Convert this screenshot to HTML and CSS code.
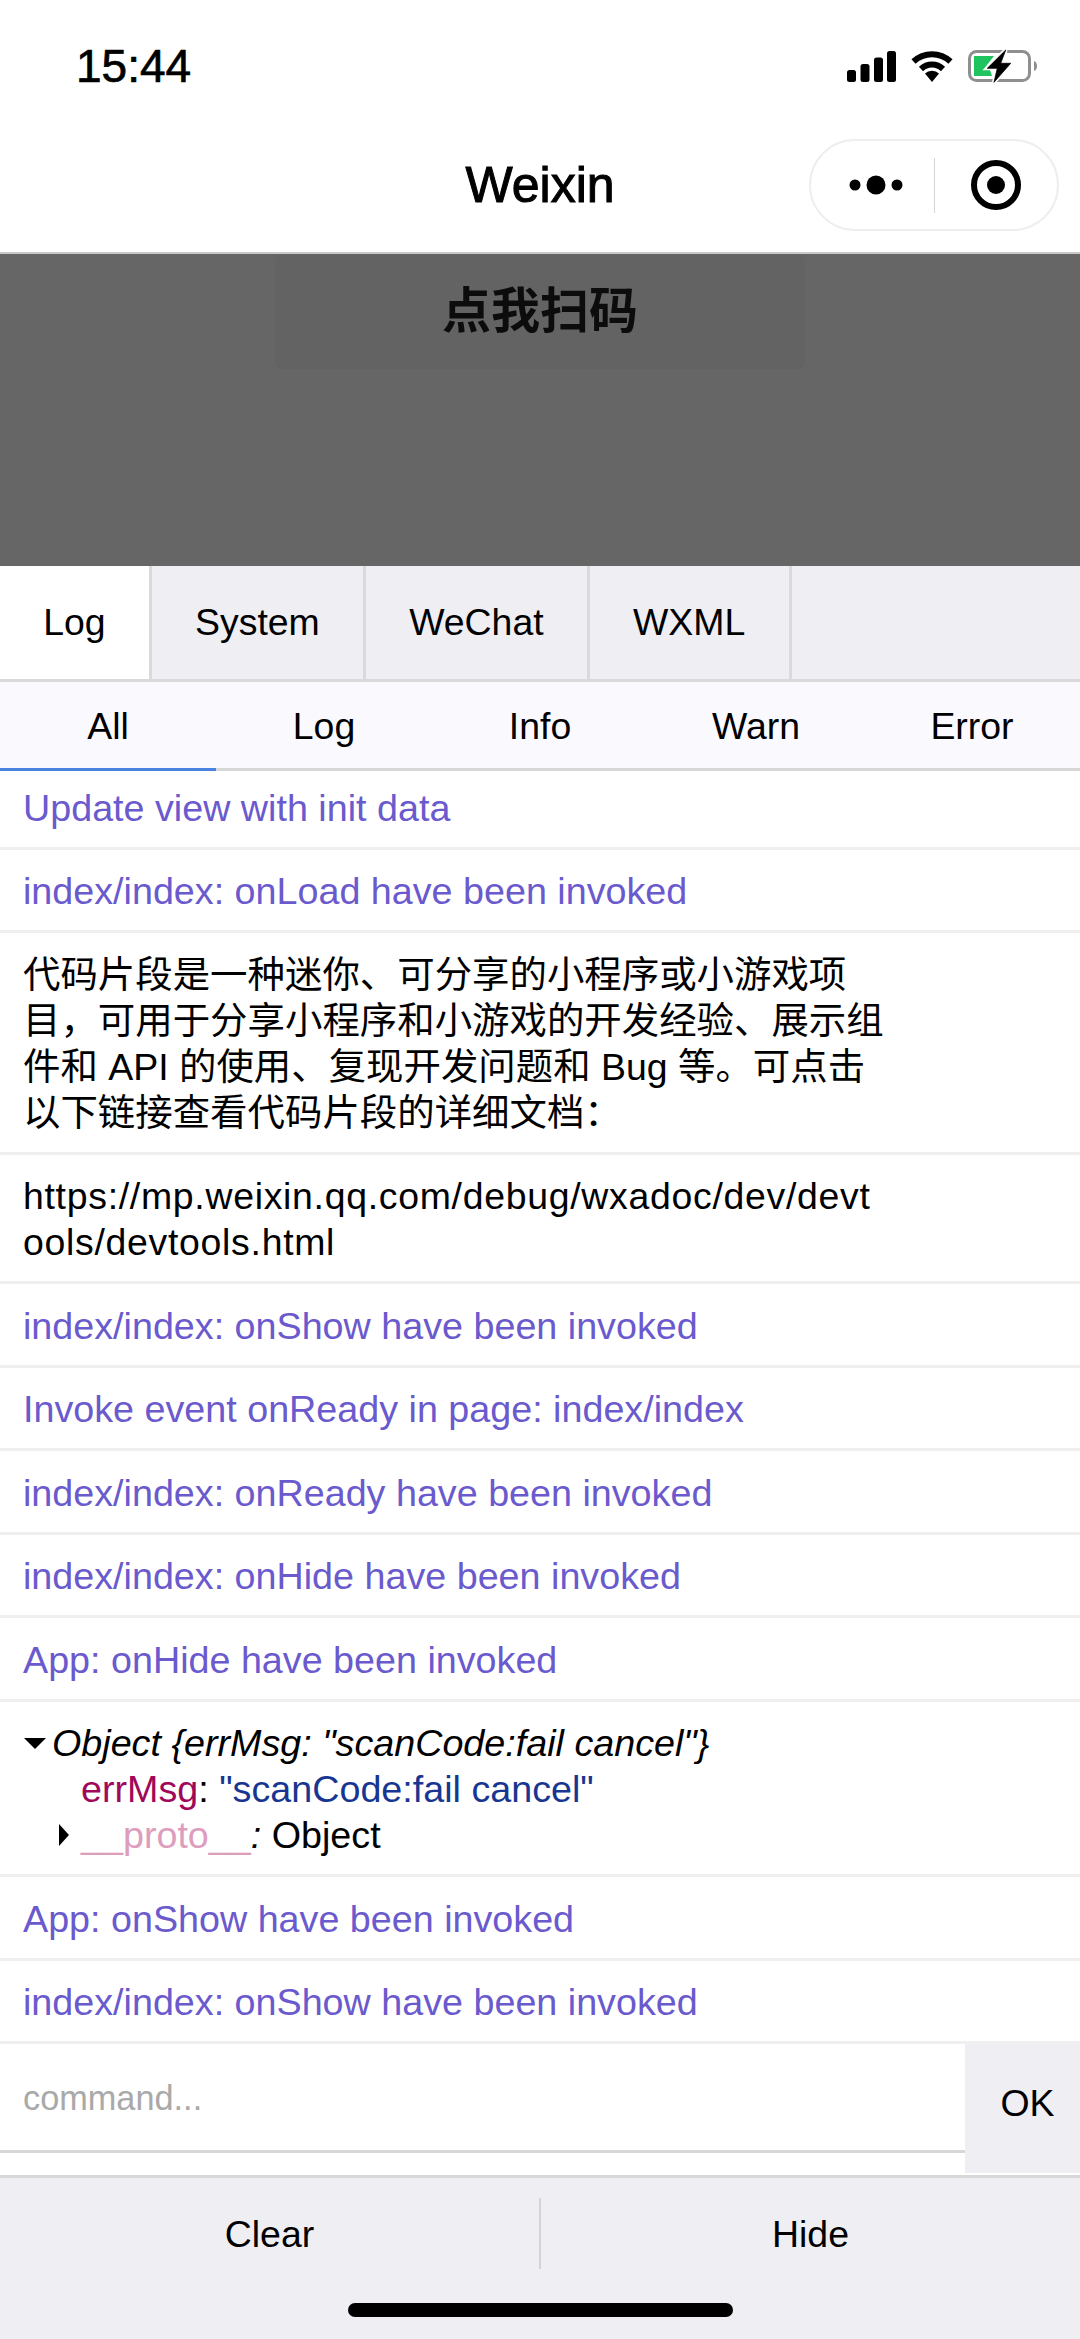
FILE: index.html
```html
<!DOCTYPE html>
<html lang="zh">
<head>
<meta charset="utf-8">
<title>Weixin</title>
<link rel="stylesheet" href="styles.css">
</head>
<body>
<div class="phone">
  <header class="top">
    <div class="status">
      <span class="time">15:44</span>
      <div class="status-icons">
        <svg class="sig" viewBox="0 0 49 31"><rect x="0" y="19" width="9" height="12" rx="2.5"/><rect x="13.5" y="13" width="9" height="18" rx="2.5"/><rect x="27" y="6.500" width="9" height="24.500" rx="2.500"/><rect x="40" y="0" width="9" height="31" rx="2.500"/></svg>
        <svg class="wifi" viewBox="0 0 42 32"><path class="wifi-arc" d="M2.500 11.500A27 27 0 0 1 39.500 11.500"/><path class="wifi-arc" d="M10 19A16 16 0 0 1 32 19"/><path d="M14 23.500A10 10 0 0 1 28 23.500L21 32Z"/></svg>
        <svg class="batt" viewBox="0 0 70 36"><rect class="batt-box" x="1.500" y="3.500" width="60" height="29" rx="7"/><path class="batt-nub" d="M66 13q3 1 3 5t-3 5Z"/><path class="batt-fill" d="M6 8H26L15 22H22L24 28H6Z"/><path class="bolt-halo" d="M37.700 2L19.300 20.300H29.300L26 34.300L42.700 15.300H32.700Z"/><path class="bolt" d="M37.700 2L19.300 20.300H29.300L26 34.300L42.700 15.300H32.700Z"/></svg>
      </div>
    </div>
    <nav class="nav">
      <span></span>
      <h1 class="title">Weixin</h1>
      <div class="capsule">
        <div class="cap-part cap-more"><svg class="dots" viewBox="0 0 54 20"><circle cx="6" cy="10" r="5.500"/><circle cx="27" cy="10" r="9.500"/><circle cx="48" cy="10" r="5.500"/></svg></div>
        <i class="cap-line"></i>
        <div class="cap-part"><svg class="target" viewBox="0 0 50 50"><circle class="ring" cx="25" cy="25" r="22"/><circle cx="25" cy="25" r="9"/></svg></div>
      </div>
    </nav>
  </header>

  <section class="masked">
    <div class="scan">点我扫码</div>
  </section>

  <section class="console">
    <div class="tabs">
      <div class="tab tab-on">Log</div>
      <div class="tab">System</div>
      <div class="tab">WeChat</div>
      <div class="tab">WXML</div>
    </div>
    <div class="subtabs">
      <div class="sub sub-on">All</div>
      <div class="sub">Log</div>
      <div class="sub">Info</div>
      <div class="sub">Warn</div>
      <div class="sub">Error</div>
    </div>
    <div class="logs">
      <div class="row row-info row-first">Update view with init data</div>
      <div class="row row-info">index/index: onLoad have been invoked</div>
      <div class="row"><div class="wrap">代码片段是一种迷你、可分享的小程序或小游戏项目，可用于分享小程序和小游戏的开发经验、展示组件和 API 的使用、复现开发问题和 Bug 等。可点击以下链接查看代码片段的详细文档：</div></div>
      <div class="row"><div class="wrap wrap-url">https://mp.weixin.qq.com/debug/wxadoc/dev/devtools/devtools.html</div></div>
      <div class="row row-info">index/index: onShow have been invoked</div>
      <div class="row row-info">Invoke event onReady in page: index/index</div>
      <div class="row row-info">index/index: onReady have been invoked</div>
      <div class="row row-info">index/index: onHide have been invoked</div>
      <div class="row row-info">App: onHide have been invoked</div>
      <div class="row row-tree">
        <div class="tree-line"><i class="tri-down"></i><em>Object {errMsg: "scanCode:fail cancel"}</em></div>
        <div class="tree-line tree-child"><span class="key">errMsg</span>: <span class="val">"scanCode:fail cancel"</span></div>
        <div class="tree-line tree-child tree-proto"><i class="tri-right"></i><span class="key key-dim">__proto__</span><em>:</em> Object</div>
      </div>
      <div class="row row-info">App: onShow have been invoked</div>
      <div class="row row-info">index/index: onShow have been invoked</div>
    </div>
    <div class="cmd">
      <div class="cmd-left">
        <div class="cmd-input">command...</div>
      </div>
      <div class="cmd-ok">OK</div>
    </div>
    <footer class="foot">
      <div class="foot-btns">
        <div class="foot-btn">Clear</div>
        <div class="foot-btn foot-btn-last">Hide</div>
      </div>
      <div class="home"></div>
    </footer>
  </section>
</div>
</body>
</html>
```
FILE: styles.css
```css
* { box-sizing: border-box; }
html, body { margin: 0; padding: 0; background: #fff; }
body {
  font-family: "Liberation Sans", "Noto Sans CJK SC", sans-serif;
  color: #000;
  font-size: 37.44px;
  line-height: 46px;
}
.phone { width: 1080px; height: 2339px; display: flex; flex-direction: column; overflow: hidden; }

.top { height: 254px; background: #fff; border-bottom: 2px solid #c9c9c9; flex: none; }
.status { height: 100px; display: flex; justify-content: space-between; align-items: center; padding: 32px 42px 0 76px; }
.time { font-size: 46px; line-height: 50px; -webkit-text-stroke: 0.7px #000; }
.status-icons { display: flex; align-items: center; gap: 15px; }
.sig { width: 49px; height: 31px; display: block; }
.wifi { width: 42px; height: 32px; display: block; }
.wifi-arc { fill: none; stroke: #000; stroke-width: 6; }
.batt { width: 70px; height: 36px; display: block; }
.batt-box { fill: none; stroke: #8f8f8f; stroke-width: 3; }
.batt-nub { fill: #8f8f8f; }
.batt-fill { fill: #1fc45e; }
.bolt-halo { fill: #fff; stroke: #fff; stroke-width: 4; }
.bolt { fill: #000; stroke: #000; stroke-width: 0.8; }

.nav { height: 152px; display: grid; grid-template-columns: minmax(0, 1fr) auto minmax(0, 1fr); align-items: center; padding: 18px 21px 0; }
.title { margin: 0; font-size: 50px; line-height: 60px; font-weight: 400; -webkit-text-stroke: 1px #000; }
.capsule { justify-self: end; width: 250px; height: 92px; border: 2px solid #eeeeee; border-radius: 46px; display: flex; align-items: center; background: #fff; }
.cap-part { width: 122.500px; flex: none; display: flex; align-items: center; justify-content: center; }
.cap-more { padding-left: 8px; }
.cap-line { width: 1px; height: 55px; background: #d5d5d5; flex: none; }
.dots { width: 54px; height: 20px; display: block; }
.target { width: 50px; height: 50px; display: block; }
.ring { fill: none; stroke: #000; stroke-width: 6; }

.masked { height: 312px; background: #666666; display: flex; justify-content: center; flex: none; }
.scan { width: 530px; height: 115px; background: #636363; border-radius: 8px; text-align: center; font-family: "Noto Sans CJK SC", sans-serif; font-weight: 700; font-size: 49px; line-height: 106px; color: #0c0c0c; }

.console { flex: 1; display: flex; flex-direction: column; min-height: 0; }
.tabs { height: 116px; display: flex; background: #eeeef3; border-bottom: 3px solid #dadada; flex: none; }
.tab { padding: 0 43.200px; line-height: 112px; border-right: 3px solid #dadada; }
.tab-on { background: #fff; }
.subtabs { height: 89px; display: flex; background: #f9f9fe; border-bottom: 3px solid #d8d8d8; flex: none; }
.sub { width: 216px; text-align: center; line-height: 88px; height: 89px; }
.sub-on { border-bottom: 3px solid #4a84e0; }

.logs { flex: none; }
.row { padding: 18.500px 23px 16px; border-bottom: 3px solid #efefef; background: #fff; font-size: 37.7px; }
.row-info { color: #6a5acd; }
.row-first { padding-top: 13.500px; }
.wrap { width: 867px; font-size: 37.44px; }
.wrap-url { word-break: break-all; letter-spacing: 0.7px; }
.tree-line { position: relative; }
.tree-line em { font-style: italic; }
.tree-line > em:first-of-type { padding-left: 29px; }
.tree-child { padding-left: 58px; }
.tree-proto > em:first-of-type { padding-left: 0; }
.key { color: #a0085a; }
.key-dim { color: #dd9dbd; }
.val { color: #183691; }
.tri-down { position: absolute; left: 1px; top: 18px; width: 0; height: 0; border-left: 11px solid transparent; border-right: 11px solid transparent; border-top: 11px solid #000; }
.tri-right { position: absolute; left: 36px; top: 12px; width: 0; height: 0; border-top: 11px solid transparent; border-bottom: 11px solid transparent; border-left: 10px solid #000; }

.cmd { height: 131px; display: flex; flex: none; background: #fff; }
.cmd-left { flex: 1; }
.cmd-input { height: 109px; border-bottom: 3px solid #d8d8d8; padding-left: 23px; font-size: 34.300px; line-height: 109px; color: #a9a9a9; }
.cmd-ok { width: 115px; height: 129px; background: #eeeef3; text-align: center; padding: 36px 0 0 10px; }

.foot { flex: 1; background: #eeeef3; border-top: 3px solid #d8d8d8; display: flex; flex-direction: column; align-items: center; }
.foot-btns { width: 100%; display: flex; padding-top: 20px; height: 92px; }
.foot-btn { flex: 1; height: 71px; text-align: center; line-height: 73px; border-right: 2px solid #d5d5d5; }
.foot-btn-last { border-right: 0; }
.home { width: 385px; height: 14px; background: #000; border-radius: 7px; margin-top: 33px; }
```
